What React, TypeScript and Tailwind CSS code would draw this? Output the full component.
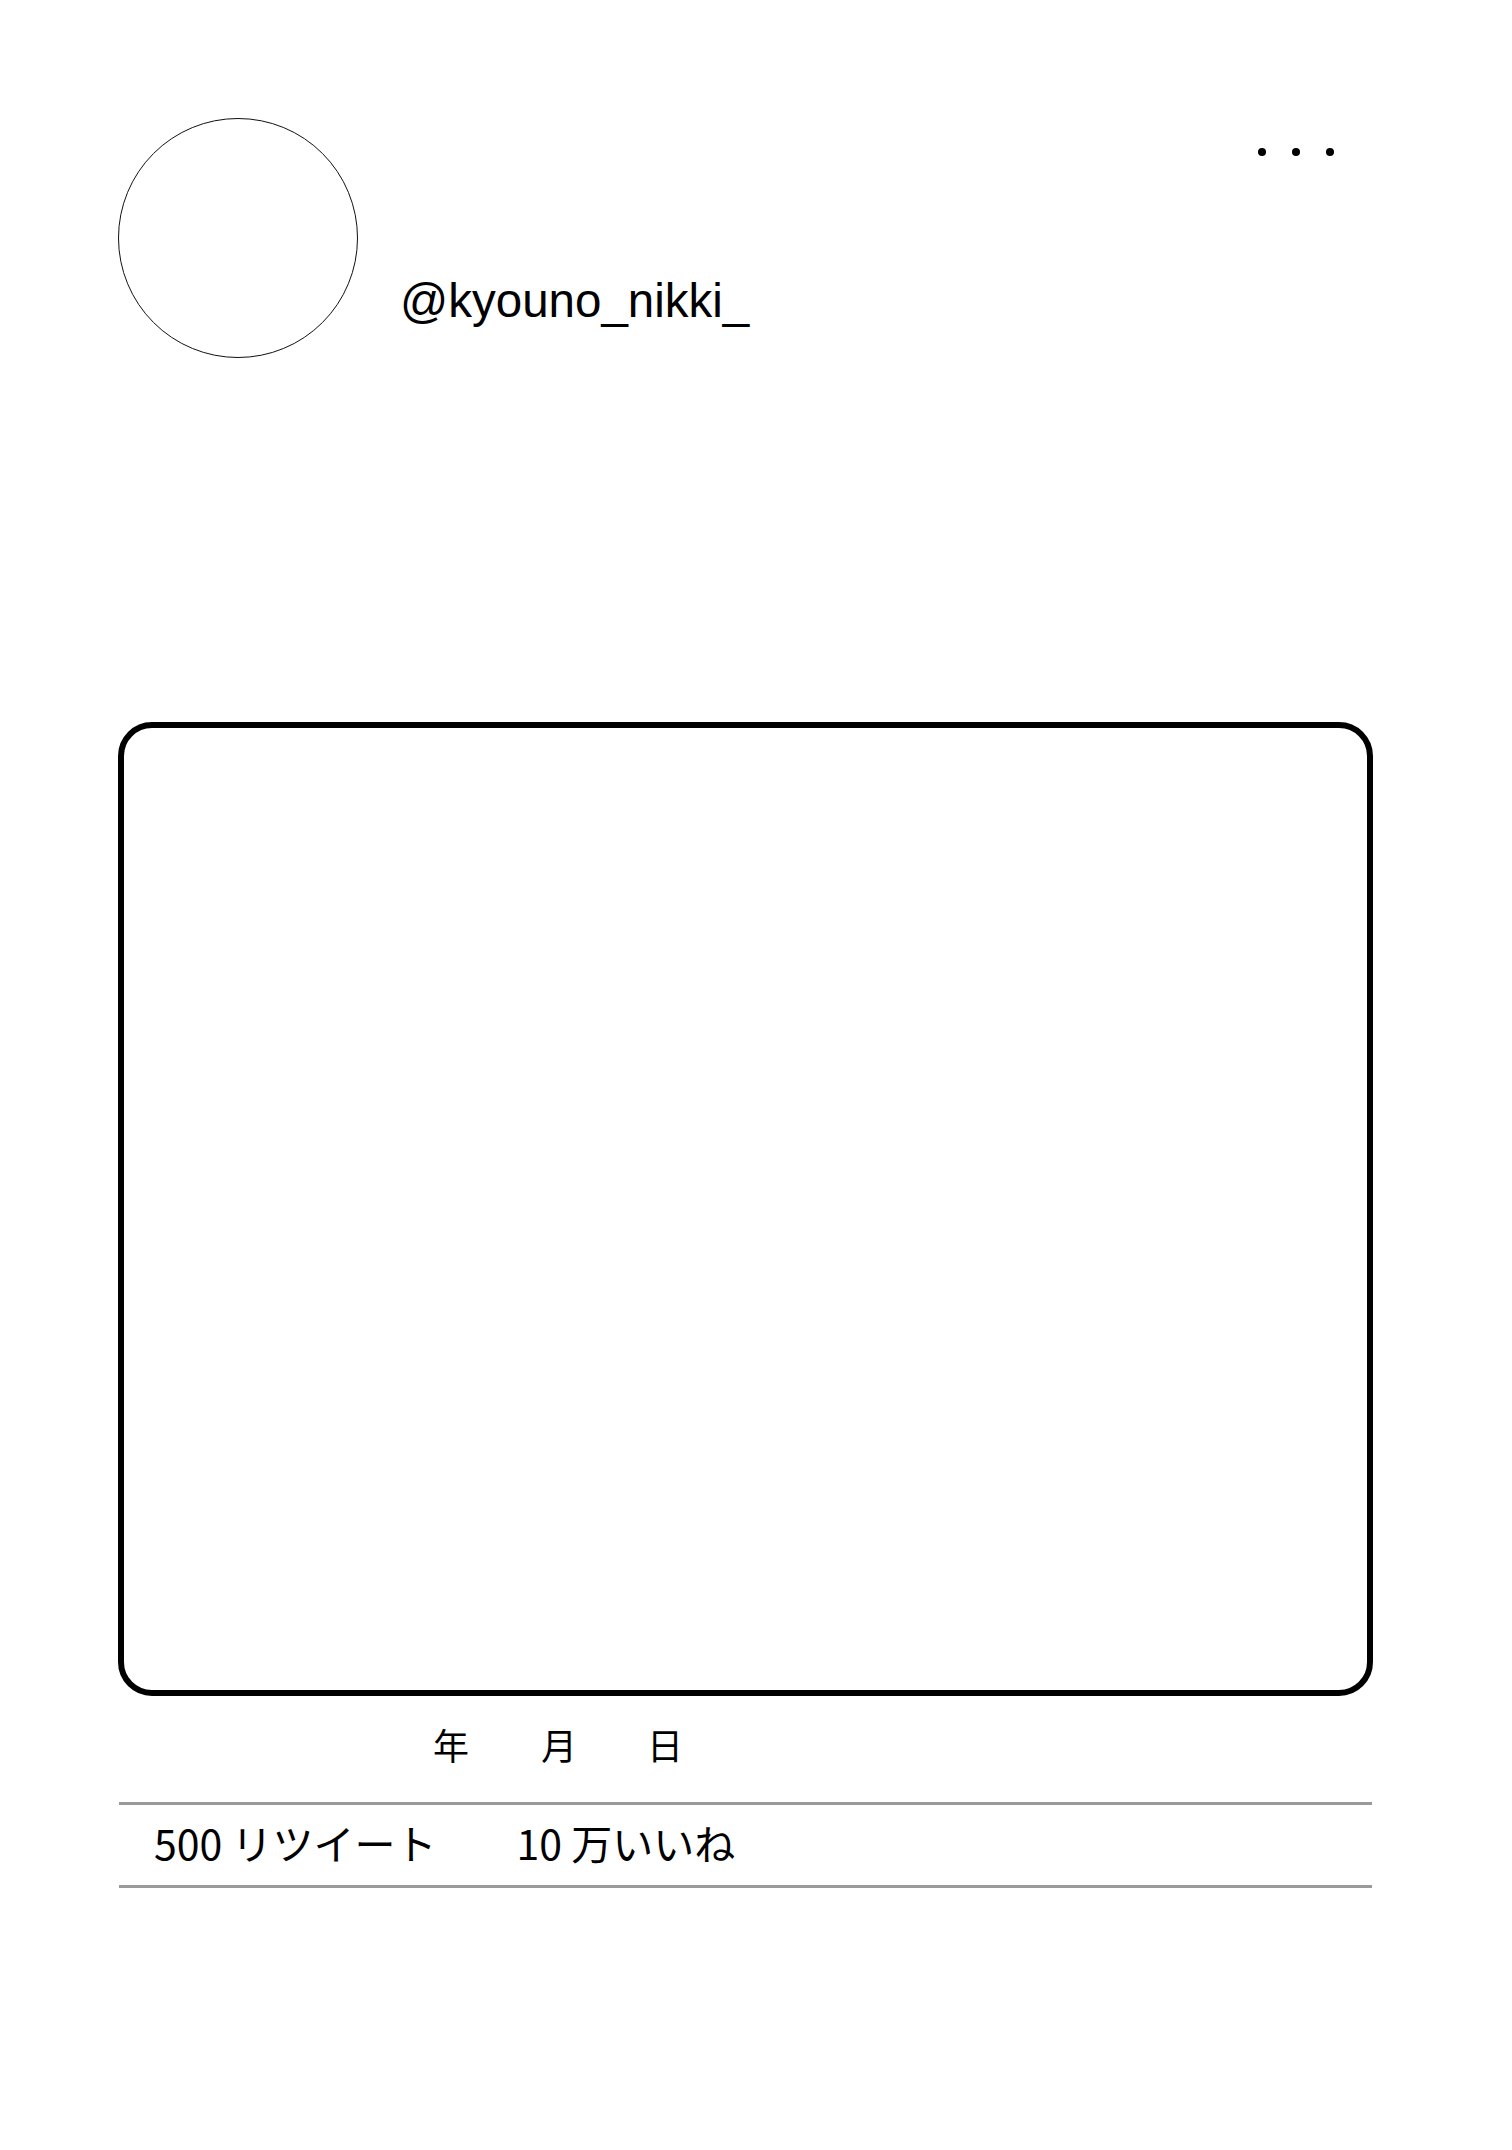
export default function App() {
  return (
    <div className="relative w-[1512px] h-[2150px] bg-white text-black font-['Noto_Sans_CJK_JP',sans-serif]">
      {/* header */}
      <div className="flex items-start pt-[118px] pl-[118px] pr-[178px]">
        <div className="w-[240px] h-[240px] shrink-0 rounded-full border border-[#111]" />
        <div className="ml-[42px] mt-[159px] text-[47.5px] leading-none font-['Liberation_Sans',Arial,sans-serif]">
          @kyouno_nikki_
        </div>
        <div className="ml-auto mt-[30px] flex gap-[26px]">
          <span className="w-[8px] h-[8px] rounded-full bg-black" />
          <span className="w-[8px] h-[8px] rounded-full bg-black" />
          <span className="w-[8px] h-[8px] rounded-full bg-black" />
        </div>
      </div>

      {/* image frame */}
      <div className="mt-[364px] ml-[118px] mr-[139px] h-[974px] border-[6px] border-black rounded-[34px]" />

      {/* date */}
      <div className="mt-[30px] flex pl-[433px] text-[36px] leading-none">
        <span className="w-[108px]">年</span>
        <span className="w-[106px]">月</span>
        <span>日</span>
      </div>

      <div className="ml-[119px] mr-[140px] mt-[40px] h-[3px] bg-[#9a9a9a]" />

      {/* stats */}
      <div className="flex items-center h-[80px] pb-[6px] pl-[154px] text-[41px] leading-none">
        <span>500 リツイート</span>
        <span className="ml-[80px]">10 万いいね</span>
      </div>

      <div className="ml-[119px] mr-[140px] h-[3px] bg-[#9a9a9a]" />
    </div>
  );
}
